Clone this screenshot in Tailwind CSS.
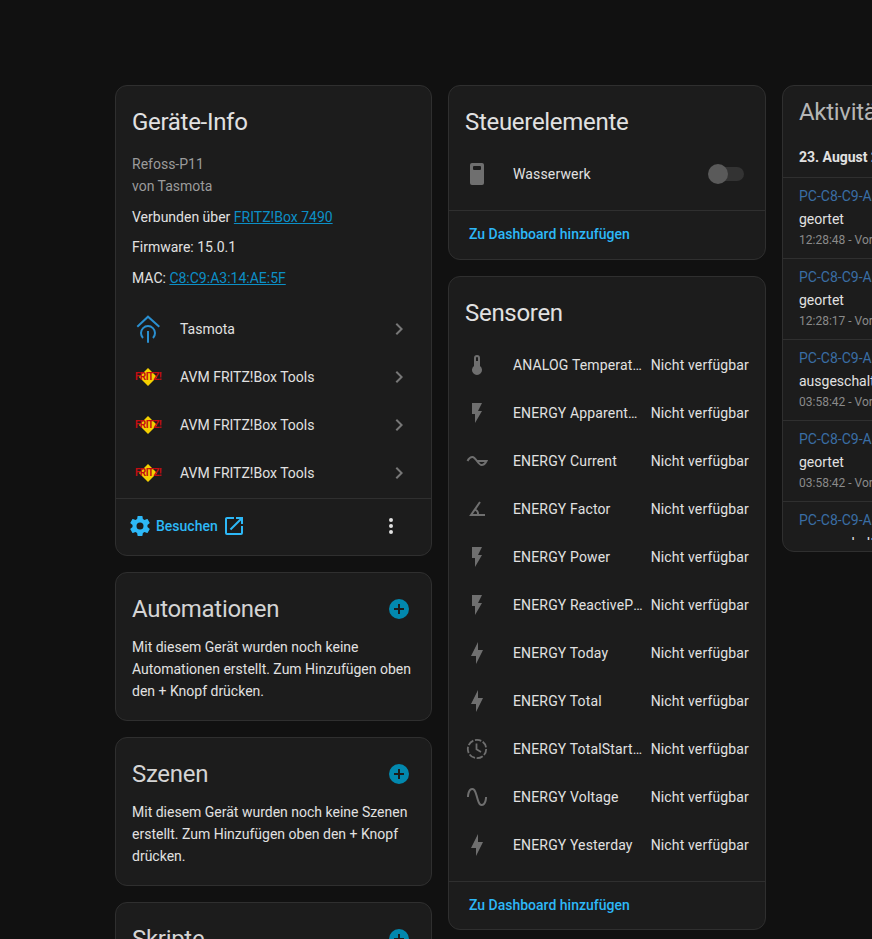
<!DOCTYPE html>
<html>
<head>
    <meta charset="utf-8">
    <script src="https://cdn.jsdelivr.net/npm/@tailwindcss/browser@4"></script>
</head>
<body class="bg-[#111111] font-['Roboto',sans-serif] text-[#e1e1e1] text-sm h-[939px] w-[872px] overflow-hidden">
    <main class="grid grid-cols-[317px_318px_317px] gap-x-4 items-start pt-[85px] pl-[115px] w-[1100px]">

        <!-- left column -->
        <div class="flex flex-col gap-4">
            <section class="bg-[#1c1c1c] border border-[#2f2f2f] rounded-xl">
                <h2 class="text-2xl leading-8 tracking-[-0.3px] pt-5 px-4">Geräte-Info</h2>
                <div class="px-4 pt-[15px]">
                    <div class="text-[#9b9b9b] leading-[22px]">Refoss-P11<br>von Tasmota</div>
                    <div class="leading-5 mt-[10px]">Verbunden über <a class="text-[#0c8fc6] underline">FRITZ!Box 7490</a></div>
                    <div class="leading-5 mt-[10px]">Firmware: 15.0.1</div>
                    <div class="leading-5 mt-[11px]">MAC: <a class="text-[#0c8fc6] underline">C8:C9:A3:14:AE:5F</a></div>
                </div>
                <ul class="mt-[17px] mb-px">
                    <li class="flex items-center h-12 pl-4 pr-5">
                        <svg class="w-6 h-6 ml-1 mr-5 overflow-visible" viewBox="0 0 24 24" fill="none" stroke="#2a8fd0" stroke-width="2">
                            <path d="M1.3 9.7 12 -0.3 23.3 9.7"/>
                            <path d="M12 14V25.7"/>
                            <path d="M7 21A7 7 0 1 1 17 21"/>
                        </svg>
                        <span class="flex-1">Tasmota</span>
                        <svg class="w-6 h-6 text-[#777777]" viewBox="0 0 24 24" fill="currentColor"><path d="M8.59,16.58L13.17,12L8.59,7.41L10,6L16,12L10,18L8.59,16.58Z"/></svg>
                    </li>
                    <li class="flex items-center h-12 pl-4 pr-5">
                        <div class="relative w-6 h-6 ml-1 mr-5 flex items-center justify-center">
                            <svg class="w-[18px] h-[18px]" viewBox="0 0 18 18"><path d="M9 0l9 9-9 9-9-9z" fill="#f5d000"/></svg>
                            <span class="absolute inset-0 flex items-center justify-center text-[10px] font-bold leading-none tracking-[-0.6px] text-[#c40d12]">FRITZ!</span>
                        </div>
                        <span class="flex-1">AVM FRITZ!Box Tools</span>
                        <svg class="w-6 h-6 text-[#777777]" viewBox="0 0 24 24" fill="currentColor"><path d="M8.59,16.58L13.17,12L8.59,7.41L10,6L16,12L10,18L8.59,16.58Z"/></svg>
                    </li>
                    <li class="flex items-center h-12 pl-4 pr-5">
                        <div class="relative w-6 h-6 ml-1 mr-5 flex items-center justify-center">
                            <svg class="w-[18px] h-[18px]" viewBox="0 0 18 18"><path d="M9 0l9 9-9 9-9-9z" fill="#f5d000"/></svg>
                            <span class="absolute inset-0 flex items-center justify-center text-[10px] font-bold leading-none tracking-[-0.6px] text-[#c40d12]">FRITZ!</span>
                        </div>
                        <span class="flex-1">AVM FRITZ!Box Tools</span>
                        <svg class="w-6 h-6 text-[#777777]" viewBox="0 0 24 24" fill="currentColor"><path d="M8.59,16.58L13.17,12L8.59,7.41L10,6L16,12L10,18L8.59,16.58Z"/></svg>
                    </li>
                    <li class="flex items-center h-12 pl-4 pr-5">
                        <div class="relative w-6 h-6 ml-1 mr-5 flex items-center justify-center">
                            <svg class="w-[18px] h-[18px]" viewBox="0 0 18 18"><path d="M9 0l9 9-9 9-9-9z" fill="#f5d000"/></svg>
                            <span class="absolute inset-0 flex items-center justify-center text-[10px] font-bold leading-none tracking-[-0.6px] text-[#c40d12]">FRITZ!</span>
                        </div>
                        <span class="flex-1">AVM FRITZ!Box Tools</span>
                        <svg class="w-6 h-6 text-[#777777]" viewBox="0 0 24 24" fill="currentColor"><path d="M8.59,16.58L13.17,12L8.59,7.41L10,6L16,12L10,18L8.59,16.58Z"/></svg>
                    </li>
                </ul>
                <footer class="flex items-center h-[57px] pb-[3px] border-t border-[#2f2f2f] pl-[13px] pr-[28px]">
                    <svg class="w-6 h-6 text-[#2db8f7] -ml-[1px]" viewBox="0 0 24 24" fill="currentColor"><path d="M12,15.5A3.5,3.5 0 0,1 8.5,12A3.5,3.5 0 0,1 12,8.5A3.5,3.5 0 0,1 15.5,12A3.5,3.5 0 0,1 12,15.5M19.43,12.97C19.47,12.65 19.5,12.33 19.5,12C19.5,11.67 19.47,11.34 19.43,11L21.54,9.37C21.73,9.22 21.78,8.95 21.66,8.73L19.66,5.27C19.54,5.05 19.27,4.96 19.05,5.05L16.56,6.05C16.04,5.66 15.5,5.32 14.87,5.07L14.5,2.42C14.46,2.18 14.25,2 14,2H10C9.75,2 9.54,2.18 9.5,2.42L9.13,5.07C8.5,5.32 7.96,5.66 7.44,6.05L4.95,5.05C4.73,4.96 4.46,5.05 4.34,5.27L2.34,8.73C2.21,8.95 2.27,9.22 2.46,9.37L4.57,11C4.53,11.34 4.5,11.67 4.5,12C4.5,12.33 4.53,12.65 4.57,12.97L2.46,14.63C2.27,14.78 2.21,15.05 2.34,15.27L4.34,18.73C4.46,18.95 4.73,19.03 4.95,18.95L7.44,17.94C7.96,18.34 8.5,18.68 9.13,18.93L9.5,21.58C9.54,21.82 9.75,22 10,22H14C14.25,22 14.46,21.82 14.5,21.58L14.87,18.93C15.5,18.67 16.04,18.34 16.56,17.94L19.05,18.95C19.27,19.03 19.54,18.95 19.66,18.73L21.66,15.27C21.78,15.05 21.73,14.78 21.54,14.63L19.43,12.97Z"/></svg>
                    <span class="ml-1 font-medium text-[#2db8f7]">Besuchen</span>
                    <svg class="w-6 h-6 ml-1 text-[#2db8f7]" viewBox="0 0 24 24" fill="currentColor"><path d="M14,3V5H17.59L7.76,14.83L9.17,16.24L19,6.41V10H21V3M19,19H5V5H12V3H5C3.89,3 3,3.9 3,5V19A2,2 0 0,0 5,21H19A2,2 0 0,0 21,19V12H19V19Z"/></svg>
                    <svg class="w-6 h-6 ml-auto" viewBox="0 0 24 24" fill="#e1e1e1"><path d="M12,16A2,2 0 0,1 14,18A2,2 0 0,1 12,20A2,2 0 0,1 10,18A2,2 0 0,1 12,16M12,10A2,2 0 0,1 14,12A2,2 0 0,1 12,14A2,2 0 0,1 10,12A2,2 0 0,1 12,10M12,4A2,2 0 0,1 14,6A2,2 0 0,1 12,8A2,2 0 0,1 10,6A2,2 0 0,1 12,4Z"/></svg>
                </footer>
            </section>

            <section class="bg-[#1c1c1c] border border-[#2f2f2f] rounded-xl pb-[18px]">
                <div class="flex items-center justify-between pt-5 pl-4 pr-5">
                    <h2 class="text-2xl leading-8 tracking-[-0.3px] text-[#d4d4d4]">Automationen</h2>
                    <svg class="w-6 h-6 text-[#0288ae]" viewBox="0 0 24 24" fill="currentColor"><path d="M17,13H13V17H11V13H7V11H11V7H13V11H17M12,2A10,10 0 0,0 2,12A10,10 0 0,0 12,22A10,10 0 0,0 22,12A10,10 0 0,0 12,2Z"/></svg>
                </div>
                <p class="px-4 pt-[11px] leading-[22px]">Mit diesem Gerät wurden noch keine Automationen erstellt. Zum Hinzufügen oben den + Knopf drücken.</p>
            </section>

            <section class="bg-[#1c1c1c] border border-[#2f2f2f] rounded-xl pb-[18px]">
                <div class="flex items-center justify-between pt-5 pl-4 pr-5">
                    <h2 class="text-2xl leading-8 tracking-[-0.3px] text-[#d4d4d4]">Szenen</h2>
                    <svg class="w-6 h-6 text-[#0288ae]" viewBox="0 0 24 24" fill="currentColor"><path d="M17,13H13V17H11V13H7V11H11V7H13V11H17M12,2A10,10 0 0,0 2,12A10,10 0 0,0 12,22A10,10 0 0,0 22,12A10,10 0 0,0 12,2Z"/></svg>
                </div>
                <p class="px-4 pt-[11px] leading-[22px]">Mit diesem Gerät wurden noch keine Szenen erstellt. Zum Hinzufügen oben den + Knopf drücken.</p>
            </section>

            <section class="bg-[#1c1c1c] border border-[#2f2f2f] rounded-xl pb-[18px]">
                <div class="flex items-center justify-between pt-5 pl-4 pr-5">
                    <h2 class="text-2xl leading-8 tracking-[-0.3px] text-[#d4d4d4]">Skripte</h2>
                    <svg class="w-6 h-6 text-[#0288ae]" viewBox="0 0 24 24" fill="currentColor"><path d="M17,13H13V17H11V13H7V11H11V7H13V11H17M12,2A10,10 0 0,0 2,12A10,10 0 0,0 12,22A10,10 0 0,0 22,12A10,10 0 0,0 12,2Z"/></svg>
                </div>
            </section>
        </div>

        <!-- middle column -->
        <div class="flex flex-col gap-4">
            <section class="bg-[#1c1c1c] border border-[#2f2f2f] rounded-xl">
                <h2 class="text-2xl leading-8 tracking-[-0.3px] pt-5 px-4">Steuerelemente</h2>
                <div class="flex items-center h-12 mt-3 mb-3 pl-4 pr-[21px]">
                    <svg class="w-6 h-6 mr-6" viewBox="0 0 24 24">
                        <rect x="5" y="1" width="14" height="22" rx="2" fill="#6f6f6f"/>
                        <rect x="8" y="4" width="8" height="4" rx="1" fill="#1c1c1c"/>
                    </svg>
                    <span class="flex-1 tracking-[0.15px]">Wasserwerk</span>
                    <div class="relative w-9 h-5 flex items-center">
                        <div class="ml-2 w-7 h-3.5 rounded-full bg-[#333333]"></div>
                        <div class="absolute left-0 top-0 w-5 h-5 rounded-full bg-[#5a5a5a]"></div>
                    </div>
                </div>
                <div class="border-t border-[#2f2f2f] h-[49px] pb-[3px] flex items-center px-5 font-medium text-[#2db8f7]">Zu Dashboard hinzufügen</div>
            </section>

            <section class="bg-[#1c1c1c] border border-[#2f2f2f] rounded-xl">
                <h2 class="text-2xl leading-8 tracking-[-0.3px] pt-5 px-4">Sensoren</h2>
                <ul class="mt-3 mb-3 tracking-[0.15px]">
                    <li class="flex items-center h-12 pl-4 pr-4">
                        <svg class="w-6 h-6 shrink-0 mr-6" viewBox="0 0 24 24" fill="#6f6f6f"><path d="M15 13V5A3 3 0 0 0 9 5V13A5 5 0 1 0 15 13M12 4A1 1 0 0 1 13 5V8H11V5A1 1 0 0 1 12 4Z"/></svg>
                        <span class="flex-1 min-w-0 truncate">ANALOG Temperature</span>
                        <span class="ml-2 shrink-0">Nicht verfügbar</span>
                    </li>
                    <li class="flex items-center h-12 pl-4 pr-4">
                        <svg class="w-6 h-6 shrink-0 mr-6" viewBox="0 0 24 24" fill="#6f6f6f"><path d="M7,2V13H10V22L17,10H13L17,2H7Z"/></svg>
                        <span class="flex-1 min-w-0 truncate">ENERGY ApparentPower</span>
                        <span class="ml-2 shrink-0">Nicht verfügbar</span>
                    </li>
                    <li class="flex items-center h-12 pl-4 pr-4">
                        <svg class="w-6 h-6 shrink-0 mr-6" viewBox="0 0 24 24" fill="none" stroke="#6f6f6f" stroke-width="2"><path d="M2.5 12C4 9 6 8 7.5 8C9 8 10.5 10 12 12H21.5C20 15 18 16 16.5 16C15 16 13.5 14 12 12"/></svg>
                        <span class="flex-1 min-w-0 truncate">ENERGY Current</span>
                        <span class="ml-2 shrink-0">Nicht verfügbar</span>
                    </li>
                    <li class="flex items-center h-12 pl-4 pr-4">
                        <svg class="w-6 h-6 shrink-0 mr-6" viewBox="0 0 24 24" fill="#6f6f6f"><path d="M20 19H4.09L14.18 4.43L15.82 5.57L11.28 12.13C12.89 12.96 14 14.62 14 16.54C14 16.7 14 16.85 13.97 17H20V19M7.91 17H11.96C12 16.85 12 16.7 12 16.54C12 15.28 11.24 14.22 10.14 13.78L7.91 17Z"/></svg>
                        <span class="flex-1 min-w-0 truncate">ENERGY Factor</span>
                        <span class="ml-2 shrink-0">Nicht verfügbar</span>
                    </li>
                    <li class="flex items-center h-12 pl-4 pr-4">
                        <svg class="w-6 h-6 shrink-0 mr-6" viewBox="0 0 24 24" fill="#6f6f6f"><path d="M7,2V13H10V22L17,10H13L17,2H7Z"/></svg>
                        <span class="flex-1 min-w-0 truncate">ENERGY Power</span>
                        <span class="ml-2 shrink-0">Nicht verfügbar</span>
                    </li>
                    <li class="flex items-center h-12 pl-4 pr-4">
                        <svg class="w-6 h-6 shrink-0 mr-6" viewBox="0 0 24 24" fill="#6f6f6f"><path d="M7,2V13H10V22L17,10H13L17,2H7Z"/></svg>
                        <span class="flex-1 min-w-0 truncate">ENERGY ReactivePower</span>
                        <span class="ml-2 shrink-0">Nicht verfügbar</span>
                    </li>
                    <li class="flex items-center h-12 pl-4 pr-4">
                        <svg class="w-6 h-6 shrink-0 mr-6" viewBox="0 0 24 24" fill="#6f6f6f"><path d="M11 15H6L13 1V9H18L11 23V15Z"/></svg>
                        <span class="flex-1 min-w-0 truncate">ENERGY Today</span>
                        <span class="ml-2 shrink-0">Nicht verfügbar</span>
                    </li>
                    <li class="flex items-center h-12 pl-4 pr-4">
                        <svg class="w-6 h-6 shrink-0 mr-6" viewBox="0 0 24 24" fill="#6f6f6f"><path d="M11 15H6L13 1V9H18L11 23V15Z"/></svg>
                        <span class="flex-1 min-w-0 truncate">ENERGY Total</span>
                        <span class="ml-2 shrink-0">Nicht verfügbar</span>
                    </li>
                    <li class="flex items-center h-12 pl-4 pr-4">
                        <svg class="w-6 h-6 shrink-0 mr-6" viewBox="0 0 24 24" fill="none" stroke="#6f6f6f" stroke-width="1.8"><circle cx="12" cy="12" r="9.2" stroke-dasharray="6.5 1.7"/><path d="M11.5 6.5V12.3L16 15"/></svg>
                        <span class="flex-1 min-w-0 truncate">ENERGY TotalStartTime</span>
                        <span class="ml-2 shrink-0">Nicht verfügbar</span>
                    </li>
                    <li class="flex items-center h-12 pl-4 pr-4">
                        <svg class="w-6 h-6 shrink-0 mr-6" viewBox="0 0 24 24" fill="#6f6f6f"><path d="M16.5,21C13.5,21 12.31,16.76 11.05,12.28C10.14,9.04 9,5 7.5,5C4.11,5 4,11.93 4,12H2C2,11.63 2.06,3 7.5,3C10.5,3 11.69,7.24 12.95,11.72C13.86,14.96 15,19 16.5,19C19.94,19 20.06,12.07 20.06,12H22.06C22.06,12.37 22,21 16.5,21Z"/></svg>
                        <span class="flex-1 min-w-0 truncate">ENERGY Voltage</span>
                        <span class="ml-2 shrink-0">Nicht verfügbar</span>
                    </li>
                    <li class="flex items-center h-12 pl-4 pr-4">
                        <svg class="w-6 h-6 shrink-0 mr-6" viewBox="0 0 24 24" fill="#6f6f6f"><path d="M11 15H6L13 1V9H18L11 23V15Z"/></svg>
                        <span class="flex-1 min-w-0 truncate">ENERGY Yesterday</span>
                        <span class="ml-2 shrink-0">Nicht verfügbar</span>
                    </li>
                </ul>
                <div class="border-t border-[#2f2f2f] h-12 pb-[2px] flex items-center px-5 font-medium text-[#2db8f7]">Zu Dashboard hinzufügen</div>
            </section>
        </div>

        <!-- right column -->
        <section class="bg-[#1c1c1c] border border-[#2f2f2f] rounded-xl h-[467px] overflow-hidden">
            <div class="h-[454px] overflow-hidden">
                <h2 class="text-2xl leading-8 tracking-[-0.3px] pt-[10px] px-4 text-[#b5b5b5]">Aktivitäten</h2>
                <div class="px-4 pt-2 h-[49px] flex items-center font-bold">23. August 2025</div>
                <div class="border-t border-[#2f2f2f] h-[81px] px-4 pt-2">
                    <div class="text-[#3a6ea5] leading-5">PC-C8-C9-A3-14-AE-5F</div>
                    <div class="leading-[26px]">geortet</div>
                    <div class="text-xs leading-4 text-[#8a8a8a]">12:28:48 - Vor 3 Stunden</div>
                </div>
                <div class="border-t border-[#2f2f2f] h-[81px] px-4 pt-2">
                    <div class="text-[#3a6ea5] leading-5">PC-C8-C9-A3-14-AE-5F</div>
                    <div class="leading-[26px]">geortet</div>
                    <div class="text-xs leading-4 text-[#8a8a8a]">12:28:17 - Vor 3 Stunden</div>
                </div>
                <div class="border-t border-[#2f2f2f] h-[81px] px-4 pt-2">
                    <div class="text-[#3a6ea5] leading-5">PC-C8-C9-A3-14-AE-5F</div>
                    <div class="leading-[26px]">ausgeschaltet</div>
                    <div class="text-xs leading-4 text-[#8a8a8a]">03:58:42 - Vor 11 Stunden</div>
                </div>
                <div class="border-t border-[#2f2f2f] h-[81px] px-4 pt-2">
                    <div class="text-[#3a6ea5] leading-5">PC-C8-C9-A3-14-AE-5F</div>
                    <div class="leading-[26px]">geortet</div>
                    <div class="text-xs leading-4 text-[#8a8a8a]">03:58:42 - Vor 11 Stunden</div>
                </div>
                <div class="border-t border-[#2f2f2f] h-[81px] px-4 pt-2">
                    <div class="text-[#3a6ea5] leading-5">PC-C8-C9-A3-14-AE-5F</div>
                    <div class="leading-[26px]">ausgeschaltet</div>
                </div>
            </div>
        </section>
    </main>
</body>
</html>
